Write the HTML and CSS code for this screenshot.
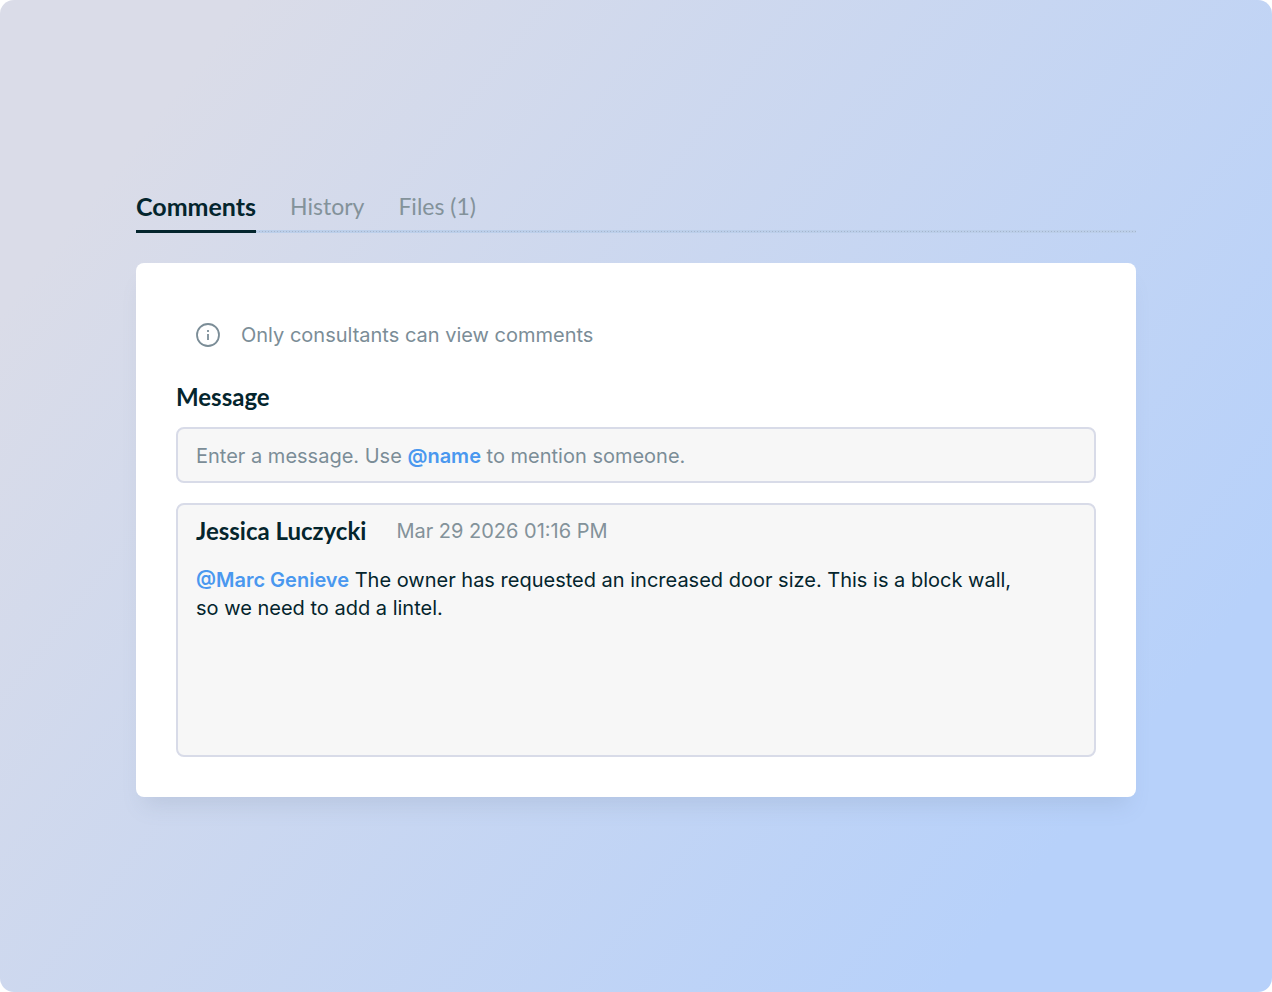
FILE: index.html
```
<!DOCTYPE html>
<html lang="en">
<head>
	<meta charset="utf-8">
	<meta name="viewport" content="width=device-width, initial-scale=1.0">
	<title>Comments</title>
	<link rel="stylesheet" href="styles.css">
</head>
<body>
<main class="stage">
	<div class="tabs" role="tablist">
		<button type="button" class="tab active" role="tab" id="tab-comments" aria-selected="true" aria-controls="comments">Comments</button>
		<button type="button" class="tab" role="tab" aria-selected="false">History</button>
		<button type="button" class="tab" role="tab" aria-selected="false">Files (1)</button>
	</div>
	<section class="card" id="comments" role="tabpanel" aria-labelledby="tab-comments">
		<p class="notice">
			<svg class="notice_icon" viewBox="0 0 24 24" fill="none" stroke="currentColor" stroke-width="1.8" aria-hidden="true">
				<circle cx="12" cy="12" r="11"/>
				<path d="M12 11v6"/>
				<path d="M12 7v2"/>
			</svg>
			Only consultants can view comments
		</p>
		<label class="field_label" for="message">Message</label>
		<div class="field">
			<input type="text" id="message" class="field_input" placeholder=" " aria-describedby="message-hint">
			<span class="field_hint" id="message-hint">Enter a message. Use <b class="mention">@name</b> to mention someone.</span>
		</div>
		<article class="comment">
			<header class="comment_head">
				<h2 class="author">Jessica Luczycki</h2>
				<time class="date" datetime="2026-03-29T13:16">Mar 29 2026 01:16 PM</time>
			</header>
			<p class="comment_text"><a href="#" class="mention">@Marc Genieve</a> The owner has requested an increased door size. This is a block wall, so we need to add a lintel.</p>
		</article>
	</section>
</main>
</body>
</html>
```
FILE: styles.css
```
* {
	box-sizing: border-box;
}
body, h2, p {
	margin: 0;
	padding: 0;
}
body {
	background-color: #fff;
	color: #04252d;
	font-family: "Inter", "Liberation Sans", sans-serif;
	font-size: 20px;
	line-height: 28px;
}
button, input {
	font: inherit;
	color: inherit;
}
.stage {
	display: flex;
	flex-direction: column;
	justify-content: center;
	min-height: 100vh;
	padding: 32px 136px;
	border-radius: 14px;
	background: linear-gradient(128deg, #dadce8 12%, #b7d1fa 84%);
}

/* tabs */
.tabs {
	display: flex;
	gap: 34px;
	margin-bottom: 30px;
	/* dotted line on a soft band */
	background:
		repeating-linear-gradient(90deg, #a5b5cc 0 1px, transparent 1px 3px) left bottom 1px / 100% 1px no-repeat,
		linear-gradient(#bccfea, #bccfea) left bottom / 100% 3px no-repeat;
}
.tab {
	padding: 0 0 13px;
	border: 0;
	border-bottom: 3px solid transparent;
	background: none;
	font-family: "Lato", sans-serif;
	font-size: 23px;
	line-height: 22px;
	color: #83929a;
	cursor: pointer;
}
.tab.active {
	border-bottom-color: #04252d;
	font-size: 25px;
	font-weight: 700;
	color: #04252d;
}

/* card */
.card {
	padding: 58px 40px 40px;
	border-radius: 8px;
	background-color: #fff;
	box-shadow: 0 16px 20px -8px rgba(110, 130, 155, 0.18);
}
.notice {
	display: flex;
	align-items: center;
	gap: 21px;
	margin-bottom: 34px;
	padding-left: 20px;
	color: #7b8d97;
}
.notice_icon {
	flex: none;
	width: 24px;
	height: 24px;
}
.field_label {
	display: block;
	margin-bottom: 16px;
	font-family: "Lato", sans-serif;
	font-size: 24px;
	font-weight: 700;
}
.field {
	position: relative;
	margin-bottom: 20px;
}
.field_input {
	display: block;
	width: 100%;
	height: 56px;
	padding: 0 18px;
	border: 2px solid #d8dbe8;
	border-radius: 8px;
	background-color: #f7f7f7;
}
/* the hint lies over the empty input, so that @name can be coloured */
.field_hint {
	position: absolute;
	top: 15px;
	left: 20px;
	color: #7b8d97;
	pointer-events: none;
}
.field_input:not(:placeholder-shown) + .field_hint {
	display: none;
}
.mention {
	font-weight: 600;
	color: #4a98ef;
	text-decoration: none;
}

/* comment */
.comment {
	min-height: 254px;
	padding: 12px 18px;
	border: 2px solid #d8dbe8;
	border-radius: 8px;
	background-color: #f7f7f7;
}
.comment_head {
	display: flex;
	align-items: center;
	gap: 30px;
	margin-bottom: 21px;
}
.author {
	font-family: "Lato", sans-serif;
	font-size: 24px;
	font-weight: 700;
}
.date {
	color: #83929a;
}
.comment_text {
	max-width: 830px;
}
```
